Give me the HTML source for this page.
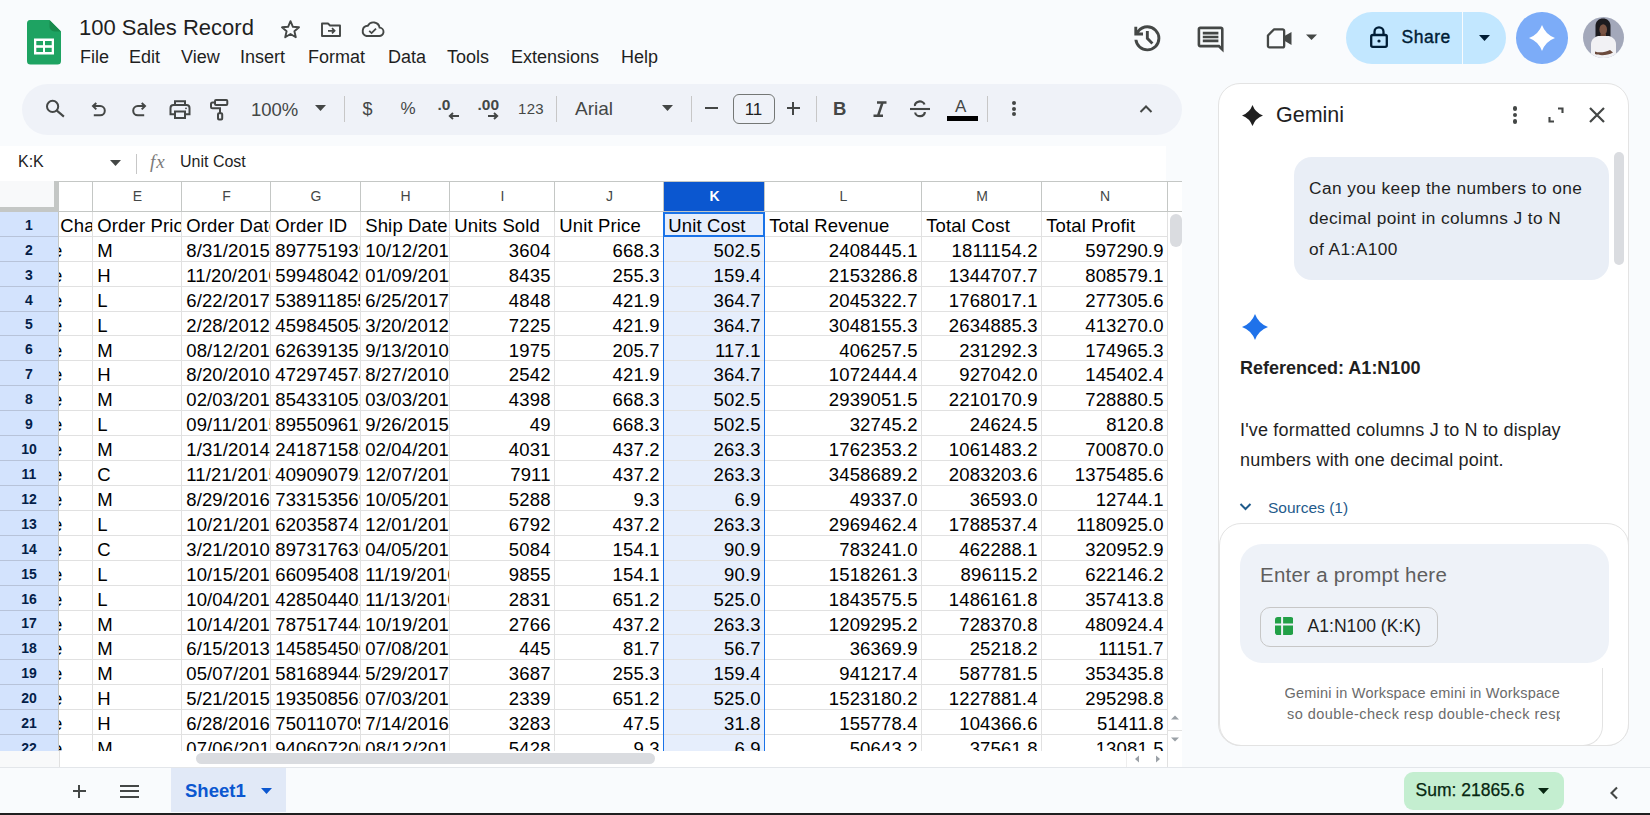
<!DOCTYPE html><html><head><meta charset="utf-8"><style>
html,body{margin:0;padding:0;}
body{width:1650px;height:815px;overflow:hidden;position:relative;background:#f9fbfd;font-family:"Liberation Sans", sans-serif;}
.a{position:absolute;}
.t{position:absolute;white-space:nowrap;}
.cell{position:absolute;overflow:hidden;white-space:nowrap;font-size:18.5px;letter-spacing:0.15px;color:#000;}
</style></head><body>
<svg class="a" style="left:27px;top:20px;" width="34" height="45" viewBox="0 0 34 45"><path d="M3 0h19.5l11.5 11.5v29.5a3.5 3.5 0 0 1-3.5 3.5h-27A3.5 3.5 0 0 1 0 41V3.5A3.5 3.5 0 0 1 3 0z" fill="#1ea362"/>
<path d="M22.5 0l11.5 11.5h-6.5a5 5 0 0 1-5-5z" fill="#188a4c"/>
<rect x="7" y="18.5" width="20" height="16" fill="#fff"/>
<rect x="9.3" y="21" width="6.7" height="4.2" fill="#1ea362"/><rect x="18" y="21" width="6.7" height="4.2" fill="#1ea362"/>
<rect x="9.3" y="27.8" width="6.7" height="4.2" fill="#1ea362"/><rect x="18" y="27.8" width="6.7" height="4.2" fill="#1ea362"/></svg>
<div class="t" style="left:79px;top:16.88px;font-size:22px;line-height:22px;color:#1f1f1f;font-weight:normal;">100 Sales Record</div>
<svg class="a" style="left:280px;top:19px;" width="21" height="21" viewBox="0 0 21 21"><path d="M10.5 2.2l2.4 5.6 6.1.5-4.6 4 1.4 5.9-5.3-3.2-5.3 3.2 1.4-5.9-4.6-4 6.1-.5z" fill="none" stroke="#444746" stroke-width="1.9" stroke-linejoin="round"/></svg>
<svg class="a" style="left:320px;top:19px;" width="22" height="21" viewBox="0 0 22 21"><path d="M2 4.5h6l2 2h10v10.5H2z" fill="none" stroke="#444746" stroke-width="1.9" stroke-linejoin="round"/><path d="M8 11.8h6.5M12 9.2l2.6 2.6-2.6 2.6" fill="none" stroke="#444746" stroke-width="1.7"/></svg>
<svg class="a" style="left:360px;top:19px;" width="25" height="21" viewBox="0 0 25 21"><path d="M6.5 17h12.5a4.2 4.2 0 0 0 .6-8.4A6.3 6.3 0 0 0 7.8 6.8 5.2 5.2 0 0 0 6.5 17z" fill="none" stroke="#444746" stroke-width="1.9"/><path d="M9.2 11.8l2.4 2.3 4.4-4.4" fill="none" stroke="#444746" stroke-width="1.8"/></svg>
<div class="t" style="left:80px;top:48.36px;font-size:18px;line-height:18px;color:#1f1f1f;font-weight:normal;">File</div>
<div class="t" style="left:129px;top:48.36px;font-size:18px;line-height:18px;color:#1f1f1f;font-weight:normal;">Edit</div>
<div class="t" style="left:181px;top:48.36px;font-size:18px;line-height:18px;color:#1f1f1f;font-weight:normal;">View</div>
<div class="t" style="left:240px;top:48.36px;font-size:18px;line-height:18px;color:#1f1f1f;font-weight:normal;">Insert</div>
<div class="t" style="left:308px;top:48.36px;font-size:18px;line-height:18px;color:#1f1f1f;font-weight:normal;">Format</div>
<div class="t" style="left:388px;top:48.36px;font-size:18px;line-height:18px;color:#1f1f1f;font-weight:normal;">Data</div>
<div class="t" style="left:447px;top:48.36px;font-size:18px;line-height:18px;color:#1f1f1f;font-weight:normal;">Tools</div>
<div class="t" style="left:511px;top:48.36px;font-size:18px;line-height:18px;color:#1f1f1f;font-weight:normal;">Extensions</div>
<div class="t" style="left:621px;top:48.36px;font-size:18px;line-height:18px;color:#1f1f1f;font-weight:normal;">Help</div>
<svg class="a" style="left:1129.6px;top:20.6px;" width="34.7" height="34.7" viewBox="0 -960 960 960"><path d="M480-120q-138 0-240.5-91.5T122-440h82q14 104 92.5 172T480-200q117 0 198.5-81.5T760-480q0-117-81.5-198.5T480-760q-69 0-129 32t-101 88h110v80H120v-240h80v94q51-64 124.5-99T480-840q75 0 140.5 28.5t114 77q48.5 48.5 77 114T840-480q0 75-28.5 140.5t-77 114q-48.5 48.5-114 77T480-120Zm112-192L440-464v-216h80v184l128 128-56 56Z" fill="#444746"/></svg>
<svg class="a" style="left:1195px;top:23.5px;" width="31.2" height="31.2" viewBox="0 -960 960 960"><path d="M240-400h480v-80H240v80Zm0-120h480v-80H240v80Zm0-120h480v-80H240v80ZM880-80 720-240H160q-33 0-56.5-23.5T80-320v-480q0-33 23.5-56.5T160-880h640q33 0 56.5 23.5T880-800v720ZM160-320h594l46 45v-525H160v480Zm0 0v-480 480Z" fill="#444746"/></svg>
<svg class="a" style="left:1265px;top:27px;" width="30" height="24" viewBox="0 0 30 24"><path d="M8.9 2.45H17.6a1.5 1.5 0 0 1 1.55 1.5V19a1.5 1.5 0 0 1-1.5 1.45H4.5a1.5 1.5 0 0 1-1.55-1.5V8.5z" fill="none" stroke="#444746" stroke-width="2.3" stroke-linejoin="round"/><path d="M19 9.3l7.5-4.4v13.1L19 13.6z" fill="#444746"/></svg>
<svg class="a" style="left:1305px;top:33px;" width="13" height="8" viewBox="0 0 13 8"><path d="M1 1.5h11L6.5 7z" fill="#444746"/></svg>
<div class="a" style="left:1345.5px;top:12px;width:160px;height:51.5px;background:#c2e7ff;border-radius:26px;"></div>
<div class="a" style="left:1462px;top:12px;width:1.3px;height:51.5px;background:#f9fbfd;"></div>
<svg class="a" style="left:1369px;top:25px;" width="20" height="24" viewBox="0 0 20 24"><rect x="2.2" y="10" width="15.6" height="11.8" rx="1.6" fill="none" stroke="#001d35" stroke-width="2.3"/><path d="M5.5 10V6.8a4.5 4.5 0 0 1 9 0V10" fill="none" stroke="#001d35" stroke-width="2.3"/><circle cx="10" cy="16" r="1.6" fill="#001d35"/></svg>
<div class="t" style="left:1401.5px;top:28.79px;font-size:17.5px;line-height:17.5px;color:#001d35;font-weight:normal;letter-spacing:0.5px;-webkit-text-stroke:0.4px #001d35;">Share</div>
<svg class="a" style="left:1478px;top:34px;" width="13" height="8" viewBox="0 0 13 8"><path d="M1 1h11L6.5 7z" fill="#001d35"/></svg>
<div class="a" style="left:1516px;top:12px;width:51.5px;height:51.5px;background:#7cacf8;border-radius:50%;"></div>
<svg class="a" style="left:1528.8px;top:24.8px;" width="26" height="26" viewBox="0 0 24 24"><path d="M12 0Q15.2 8.8 24 12 15.2 15.2 12 24 8.8 15.2 0 12 8.8 8.8 12 0z" fill="#fff"/></svg>
<svg class="a" style="left:1583px;top:17.4px;" width="41" height="41" viewBox="0 0 41 41"><defs><clipPath id="av"><circle cx="20.5" cy="20.5" r="20.5"/></clipPath></defs><g clip-path="url(#av)"><rect width="41" height="41" fill="#a3a8ba"/><path d="M12.5 9c0-5 3.5-7.5 7.5-7.5s7.5 2.5 7.5 7.5v11c0 1.5-1 2.5-2.5 2.5h-10c-1.5 0-2.5-1-2.5-2.5z" fill="#1c1b1f"/><ellipse cx="20.2" cy="12.5" rx="3.8" ry="5.3" fill="#7a5444"/><path d="M17.5 17h5.5v4h-5.5z" fill="#6e4a3a"/><path d="M8 41V27c0-4 3.5-7.5 7.5-8h10c4 .5 7.5 4 7.5 8v14z" fill="#f1f1f4"/><path d="M12 34.5c4 1.5 10 1 15-1.5l3 2.5c-5 3-13 3.5-18 1.5z" fill="#6b4a3c"/></g></svg>
<div class="a" style="left:21.5px;top:84px;width:1160.5px;height:50.5px;background:#eff2f8;border-radius:26px;"></div>
<svg class="a" style="left:44px;top:97px;" width="24" height="24" viewBox="0 0 24 24"><circle cx="8.6" cy="9.4" r="5.6" fill="none" stroke="#444746" stroke-width="2"/><path d="M12.6 13.4l7.3 6.2" stroke="#444746" stroke-width="2.1"/></svg>
<svg class="a" style="left:87px;top:98px;" width="24" height="24" viewBox="0 0 24 24"><path d="M6.8 17.3h6.4a4.6 4.6 0 0 0 0-9.2H6" fill="none" stroke="#444746" stroke-width="2"/><path d="M9.3 5L6 8.1l3.3 3.3" fill="none" stroke="#444746" stroke-width="2"/></svg>
<svg class="a" style="left:126px;top:98px;" width="24" height="24" viewBox="0 0 24 24"><path d="M18.2 17.3h-6.4a4.6 4.6 0 0 1 0-9.2H19" fill="none" stroke="#444746" stroke-width="2"/><path d="M15.7 5l3.3 3.1-3.3 3.3" fill="none" stroke="#444746" stroke-width="2"/></svg>
<svg class="a" style="left:167px;top:97px;" width="26" height="26" viewBox="0 0 26 26"><path d="M8 7.5V4.3h10v3.2" fill="none" stroke="#444746" stroke-width="2"/><path d="M7.5 17.3H3.5v-6.3a3 3 0 0 1 3-3h13a3 3 0 0 1 3 3v6.3h-4" fill="none" stroke="#444746" stroke-width="2"/><rect x="8" y="14.5" width="10" height="6.5" fill="none" stroke="#444746" stroke-width="2"/><circle cx="19" cy="11.3" r="0.9" fill="#444746"/></svg>
<svg class="a" style="left:207px;top:96px;" width="24" height="28" viewBox="0 0 24 28"><rect x="8" y="4" width="12.3" height="5" rx="1" fill="none" stroke="#444746" stroke-width="2"/><path d="M8 6.5H5.5a1.5 1.5 0 0 0-1.5 1.5v2.7a1.5 1.5 0 0 0 1.5 1.5h7.5v5.3" fill="none" stroke="#444746" stroke-width="2"/><rect x="11" y="17.3" width="4.2" height="6.3" rx="1" fill="none" stroke="#444746" stroke-width="2"/></svg>
<div class="t" style="left:251px;top:100.84px;font-size:18.5px;line-height:18.5px;color:#444746;font-weight:normal;">100%</div>
<svg class="a" style="left:314px;top:104px;" width="13" height="8" viewBox="0 0 13 8"><path d="M1 1h11L6.5 7z" fill="#444746"/></svg>
<div class="a" style="left:343.5px;top:96px;width:1px;height:26px;background:#c7c7c7;"></div>
<div class="t" style="left:362.5px;top:100.26px;font-size:18px;line-height:18px;color:#444746;font-weight:500;">$</div>
<div class="t" style="left:400.5px;top:100.11px;font-size:17px;line-height:17px;color:#444746;font-weight:normal;">%</div>
<div class="t" style="left:437.5px;top:97.38px;font-size:15.5px;line-height:15.5px;color:#444746;font-weight:bold;">.0</div>
<svg class="a" style="left:447px;top:112px;" width="13" height="8" viewBox="0 0 13 8"><path d="M12 4H3M6 1L2.8 4 6 7" fill="none" stroke="#444746" stroke-width="1.9"/></svg>
<div class="t" style="left:477.5px;top:97.38px;font-size:15.5px;line-height:15.5px;color:#444746;font-weight:bold;">.00</div>
<svg class="a" style="left:487px;top:112px;" width="13" height="8" viewBox="0 0 13 8"><path d="M1 4h9M7 1l3.2 3L7 7" fill="none" stroke="#444746" stroke-width="1.9"/></svg>
<div class="t" style="left:518px;top:100.80px;font-size:15px;line-height:15px;color:#444746;font-weight:normal;letter-spacing:0.3px;">123</div>
<div class="a" style="left:556px;top:96px;width:1px;height:26px;background:#c7c7c7;"></div>
<div class="t" style="left:575px;top:99.42px;font-size:19px;line-height:19px;color:#444746;font-weight:normal;">Arial</div>
<svg class="a" style="left:660.5px;top:104px;" width="13" height="8" viewBox="0 0 13 8"><path d="M1 1h11L6.5 7z" fill="#444746"/></svg>
<div class="a" style="left:691px;top:96px;width:1px;height:26px;background:#c7c7c7;"></div>
<div class="a" style="left:705px;top:107px;width:13px;height:2px;background:#444746;"></div>
<div class="a" style="left:732.5px;top:94px;width:42px;height:29.5px;background:transparent;border:1.3px solid #747775;border-radius:6px;box-sizing:border-box;"></div>
<div class="t" style="left:733.5px;width:40px;text-align:center;top:101.11px;font-size:17px;line-height:17px;color:#1f1f1f;font-weight:normal;">11</div>
<div class="a" style="left:786.5px;top:107px;width:13px;height:2px;background:#444746;"></div>
<div class="a" style="left:792px;top:101.5px;width:2px;height:13px;background:#444746;"></div>
<div class="a" style="left:815.5px;top:96px;width:1px;height:26px;background:#c7c7c7;"></div>
<div class="t" style="left:833px;top:99.54px;font-size:18.5px;line-height:18.5px;color:#444746;font-weight:bold;">B</div>
<svg class="a" style="left:868px;top:97px;" width="24" height="24" viewBox="0 0 24 24"><path d="M9 5.5h9.5M5.5 18.8h9.5M14.5 5.5L10 18.8" fill="none" stroke="#444746" stroke-width="2.5"/></svg>
<svg class="a" style="left:908px;top:97px;" width="24" height="24" viewBox="0 0 24 24"><path d="M2 12h20" stroke="#444746" stroke-width="2.1"/><path d="M7 9a4.5 3.5 0 0 1 9.5-1.5" fill="none" stroke="#444746" stroke-width="2.2"/><path d="M16.8 15a4.7 3.8 0 0 1-9.6 0.5" fill="none" stroke="#444746" stroke-width="2.2"/></svg>
<div class="t" style="left:955px;top:98.31px;font-size:17px;line-height:17px;color:#444746;font-weight:normal;">A</div>
<div class="a" style="left:946.5px;top:116px;width:31px;height:5px;background:#000;"></div>
<div class="a" style="left:987px;top:96px;width:1px;height:26px;background:#c7c7c7;"></div>
<div class="a" style="left:1011.5px;top:101.39999999999999px;width:4px;height:4px;background:#444746;border-radius:50%;"></div>
<div class="a" style="left:1011.5px;top:106.6px;width:4px;height:4px;background:#444746;border-radius:50%;"></div>
<div class="a" style="left:1011.5px;top:111.8px;width:4px;height:4px;background:#444746;border-radius:50%;"></div>
<svg class="a" style="left:1139px;top:103.5px;" width="14" height="10" viewBox="0 0 14 10"><path d="M1.5 8L7 2.5l5.5 5.5" fill="none" stroke="#444746" stroke-width="2"/></svg>
<div class="a" style="left:0px;top:145.5px;width:1166px;height:35.5px;background:#fff;"></div>
<div class="t" style="left:18px;top:154.06px;font-size:16px;line-height:16px;color:#1f1f1f;font-weight:normal;">K:K</div>
<svg class="a" style="left:109px;top:159px;" width="13" height="8" viewBox="0 0 13 8"><path d="M1 1h11L6.5 7z" fill="#444746"/></svg>
<div class="a" style="left:136px;top:153.5px;width:1px;height:20px;background:#c7c7c7;"></div>
<div class="t" style="left:150px;top:152.42px;font-size:19px;line-height:19px;color:#7b7b7b;font-weight:normal;font-family:'Liberation Serif',serif;letter-spacing:1px;"><i>fx</i></div>
<div class="t" style="left:180px;top:154.06px;font-size:16px;line-height:16px;color:#1f1f1f;font-weight:normal;">Unit Cost</div>
<div class="a" style="left:0px;top:181px;width:1182px;height:570px;background:#fff;"></div>
<div class="a" style="left:664px;top:211.5px;width:100px;height:539.5px;background:#e6eefc;"></div>
<div class="cell" style="left:3.80px;top:211.50px;width:88.20px;height:24.80px;"><span class="a" style="left:4.2px;top:5.44px;line-height:18.5px;">Sales Channel</span></div>
<div class="cell" style="left:93.00px;top:211.50px;width:88.00px;height:24.80px;"><span class="a" style="left:4.2px;top:5.44px;line-height:18.5px;">Order Priority</span></div>
<div class="cell" style="left:182.00px;top:211.50px;width:88.00px;height:24.80px;"><span class="a" style="left:4.2px;top:5.44px;line-height:18.5px;">Order Date</span></div>
<div class="cell" style="left:271.00px;top:211.50px;width:89.00px;height:24.80px;"><span class="a" style="left:4.2px;top:5.44px;line-height:18.5px;">Order ID</span></div>
<div class="cell" style="left:361.00px;top:211.50px;width:88.00px;height:24.80px;"><span class="a" style="left:4.2px;top:5.44px;line-height:18.5px;">Ship Date</span></div>
<div class="cell" style="left:450.00px;top:211.50px;width:104.00px;height:24.80px;"><span class="a" style="left:4.2px;top:5.44px;line-height:18.5px;">Units Sold</span></div>
<div class="cell" style="left:555.00px;top:211.50px;width:108.00px;height:24.80px;"><span class="a" style="left:4.2px;top:5.44px;line-height:18.5px;">Unit Price</span></div>
<div class="cell" style="left:664.00px;top:211.50px;width:100.00px;height:24.80px;"><span class="a" style="left:4.2px;top:5.44px;line-height:18.5px;">Unit Cost</span></div>
<div class="cell" style="left:765.00px;top:211.50px;width:156.00px;height:24.80px;"><span class="a" style="left:4.2px;top:5.44px;line-height:18.5px;">Total Revenue</span></div>
<div class="cell" style="left:922.00px;top:211.50px;width:119.00px;height:24.80px;"><span class="a" style="left:4.2px;top:5.44px;line-height:18.5px;">Total Cost</span></div>
<div class="cell" style="left:1042.00px;top:211.50px;width:125.00px;height:24.80px;"><span class="a" style="left:4.2px;top:5.44px;line-height:18.5px;">Total Profit</span></div>
<div class="cell" style="left:3.80px;top:236.30px;width:88.20px;height:24.92px;"><span class="a" style="left:4.2px;top:5.55px;line-height:18.5px;">Online</span></div>
<div class="cell" style="left:93.00px;top:236.30px;width:88.00px;height:24.92px;"><span class="a" style="left:4.2px;top:5.55px;line-height:18.5px;">M</span></div>
<div class="cell" style="left:182.00px;top:236.30px;width:88.00px;height:24.92px;"><span class="a" style="left:4.2px;top:5.55px;line-height:18.5px;">8/31/2015</span></div>
<div class="cell" style="left:271.00px;top:236.30px;width:89.00px;height:24.92px;"><span class="a" style="left:4.2px;top:5.55px;line-height:18.5px;">897751939</span></div>
<div class="cell" style="left:361.00px;top:236.30px;width:88.00px;height:24.92px;"><span class="a" style="left:4.2px;top:5.55px;line-height:18.5px;">10/12/2015</span></div>
<div class="cell" style="left:450.00px;top:236.30px;width:104.00px;height:24.92px;"><span class="a" style="right:3.4px;top:5.55px;line-height:18.5px;">3604</span></div>
<div class="cell" style="left:555.00px;top:236.30px;width:108.00px;height:24.92px;"><span class="a" style="right:3.4px;top:5.55px;line-height:18.5px;">668.3</span></div>
<div class="cell" style="left:664.00px;top:236.30px;width:100.00px;height:24.92px;"><span class="a" style="right:3.4px;top:5.55px;line-height:18.5px;">502.5</span></div>
<div class="cell" style="left:765.00px;top:236.30px;width:156.00px;height:24.92px;"><span class="a" style="right:3.4px;top:5.55px;line-height:18.5px;">2408445.1</span></div>
<div class="cell" style="left:922.00px;top:236.30px;width:119.00px;height:24.92px;"><span class="a" style="right:3.4px;top:5.55px;line-height:18.5px;">1811154.2</span></div>
<div class="cell" style="left:1042.00px;top:236.30px;width:125.00px;height:24.92px;"><span class="a" style="right:3.4px;top:5.55px;line-height:18.5px;">597290.9</span></div>
<div class="cell" style="left:3.80px;top:261.22px;width:88.20px;height:24.91px;"><span class="a" style="left:4.2px;top:5.55px;line-height:18.5px;">Online</span></div>
<div class="cell" style="left:93.00px;top:261.22px;width:88.00px;height:24.91px;"><span class="a" style="left:4.2px;top:5.55px;line-height:18.5px;">H</span></div>
<div class="cell" style="left:182.00px;top:261.22px;width:88.00px;height:24.91px;"><span class="a" style="left:4.2px;top:5.55px;line-height:18.5px;">11/20/2010</span></div>
<div class="cell" style="left:271.00px;top:261.22px;width:89.00px;height:24.91px;"><span class="a" style="left:4.2px;top:5.55px;line-height:18.5px;">599480426</span></div>
<div class="cell" style="left:361.00px;top:261.22px;width:88.00px;height:24.91px;"><span class="a" style="left:4.2px;top:5.55px;line-height:18.5px;">01/09/2011</span></div>
<div class="cell" style="left:450.00px;top:261.22px;width:104.00px;height:24.91px;"><span class="a" style="right:3.4px;top:5.55px;line-height:18.5px;">8435</span></div>
<div class="cell" style="left:555.00px;top:261.22px;width:108.00px;height:24.91px;"><span class="a" style="right:3.4px;top:5.55px;line-height:18.5px;">255.3</span></div>
<div class="cell" style="left:664.00px;top:261.22px;width:100.00px;height:24.91px;"><span class="a" style="right:3.4px;top:5.55px;line-height:18.5px;">159.4</span></div>
<div class="cell" style="left:765.00px;top:261.22px;width:156.00px;height:24.91px;"><span class="a" style="right:3.4px;top:5.55px;line-height:18.5px;">2153286.8</span></div>
<div class="cell" style="left:922.00px;top:261.22px;width:119.00px;height:24.91px;"><span class="a" style="right:3.4px;top:5.55px;line-height:18.5px;">1344707.7</span></div>
<div class="cell" style="left:1042.00px;top:261.22px;width:125.00px;height:24.91px;"><span class="a" style="right:3.4px;top:5.55px;line-height:18.5px;">808579.1</span></div>
<div class="cell" style="left:3.80px;top:286.13px;width:88.20px;height:24.92px;"><span class="a" style="left:4.2px;top:5.55px;line-height:18.5px;">Online</span></div>
<div class="cell" style="left:93.00px;top:286.13px;width:88.00px;height:24.92px;"><span class="a" style="left:4.2px;top:5.55px;line-height:18.5px;">L</span></div>
<div class="cell" style="left:182.00px;top:286.13px;width:88.00px;height:24.92px;"><span class="a" style="left:4.2px;top:5.55px;line-height:18.5px;">6/22/2017</span></div>
<div class="cell" style="left:271.00px;top:286.13px;width:89.00px;height:24.92px;"><span class="a" style="left:4.2px;top:5.55px;line-height:18.5px;">538911855</span></div>
<div class="cell" style="left:361.00px;top:286.13px;width:88.00px;height:24.92px;"><span class="a" style="left:4.2px;top:5.55px;line-height:18.5px;">6/25/2017</span></div>
<div class="cell" style="left:450.00px;top:286.13px;width:104.00px;height:24.92px;"><span class="a" style="right:3.4px;top:5.55px;line-height:18.5px;">4848</span></div>
<div class="cell" style="left:555.00px;top:286.13px;width:108.00px;height:24.92px;"><span class="a" style="right:3.4px;top:5.55px;line-height:18.5px;">421.9</span></div>
<div class="cell" style="left:664.00px;top:286.13px;width:100.00px;height:24.92px;"><span class="a" style="right:3.4px;top:5.55px;line-height:18.5px;">364.7</span></div>
<div class="cell" style="left:765.00px;top:286.13px;width:156.00px;height:24.92px;"><span class="a" style="right:3.4px;top:5.55px;line-height:18.5px;">2045322.7</span></div>
<div class="cell" style="left:922.00px;top:286.13px;width:119.00px;height:24.92px;"><span class="a" style="right:3.4px;top:5.55px;line-height:18.5px;">1768017.1</span></div>
<div class="cell" style="left:1042.00px;top:286.13px;width:125.00px;height:24.92px;"><span class="a" style="right:3.4px;top:5.55px;line-height:18.5px;">277305.6</span></div>
<div class="cell" style="left:3.80px;top:311.05px;width:88.20px;height:24.92px;"><span class="a" style="left:4.2px;top:5.55px;line-height:18.5px;">Online</span></div>
<div class="cell" style="left:93.00px;top:311.05px;width:88.00px;height:24.92px;"><span class="a" style="left:4.2px;top:5.55px;line-height:18.5px;">L</span></div>
<div class="cell" style="left:182.00px;top:311.05px;width:88.00px;height:24.92px;"><span class="a" style="left:4.2px;top:5.55px;line-height:18.5px;">2/28/2012</span></div>
<div class="cell" style="left:271.00px;top:311.05px;width:89.00px;height:24.92px;"><span class="a" style="left:4.2px;top:5.55px;line-height:18.5px;">459845054</span></div>
<div class="cell" style="left:361.00px;top:311.05px;width:88.00px;height:24.92px;"><span class="a" style="left:4.2px;top:5.55px;line-height:18.5px;">3/20/2012</span></div>
<div class="cell" style="left:450.00px;top:311.05px;width:104.00px;height:24.92px;"><span class="a" style="right:3.4px;top:5.55px;line-height:18.5px;">7225</span></div>
<div class="cell" style="left:555.00px;top:311.05px;width:108.00px;height:24.92px;"><span class="a" style="right:3.4px;top:5.55px;line-height:18.5px;">421.9</span></div>
<div class="cell" style="left:664.00px;top:311.05px;width:100.00px;height:24.92px;"><span class="a" style="right:3.4px;top:5.55px;line-height:18.5px;">364.7</span></div>
<div class="cell" style="left:765.00px;top:311.05px;width:156.00px;height:24.92px;"><span class="a" style="right:3.4px;top:5.55px;line-height:18.5px;">3048155.3</span></div>
<div class="cell" style="left:922.00px;top:311.05px;width:119.00px;height:24.92px;"><span class="a" style="right:3.4px;top:5.55px;line-height:18.5px;">2634885.3</span></div>
<div class="cell" style="left:1042.00px;top:311.05px;width:125.00px;height:24.92px;"><span class="a" style="right:3.4px;top:5.55px;line-height:18.5px;">413270.0</span></div>
<div class="cell" style="left:3.80px;top:335.96px;width:88.20px;height:24.91px;"><span class="a" style="left:4.2px;top:5.55px;line-height:18.5px;">Online</span></div>
<div class="cell" style="left:93.00px;top:335.96px;width:88.00px;height:24.91px;"><span class="a" style="left:4.2px;top:5.55px;line-height:18.5px;">M</span></div>
<div class="cell" style="left:182.00px;top:335.96px;width:88.00px;height:24.91px;"><span class="a" style="left:4.2px;top:5.55px;line-height:18.5px;">08/12/2010</span></div>
<div class="cell" style="left:271.00px;top:335.96px;width:89.00px;height:24.91px;"><span class="a" style="left:4.2px;top:5.55px;line-height:18.5px;">626391351</span></div>
<div class="cell" style="left:361.00px;top:335.96px;width:88.00px;height:24.91px;"><span class="a" style="left:4.2px;top:5.55px;line-height:18.5px;">9/13/2010</span></div>
<div class="cell" style="left:450.00px;top:335.96px;width:104.00px;height:24.91px;"><span class="a" style="right:3.4px;top:5.55px;line-height:18.5px;">1975</span></div>
<div class="cell" style="left:555.00px;top:335.96px;width:108.00px;height:24.91px;"><span class="a" style="right:3.4px;top:5.55px;line-height:18.5px;">205.7</span></div>
<div class="cell" style="left:664.00px;top:335.96px;width:100.00px;height:24.91px;"><span class="a" style="right:3.4px;top:5.55px;line-height:18.5px;">117.1</span></div>
<div class="cell" style="left:765.00px;top:335.96px;width:156.00px;height:24.91px;"><span class="a" style="right:3.4px;top:5.55px;line-height:18.5px;">406257.5</span></div>
<div class="cell" style="left:922.00px;top:335.96px;width:119.00px;height:24.91px;"><span class="a" style="right:3.4px;top:5.55px;line-height:18.5px;">231292.3</span></div>
<div class="cell" style="left:1042.00px;top:335.96px;width:125.00px;height:24.91px;"><span class="a" style="right:3.4px;top:5.55px;line-height:18.5px;">174965.3</span></div>
<div class="cell" style="left:3.80px;top:360.88px;width:88.20px;height:24.92px;"><span class="a" style="left:4.2px;top:5.55px;line-height:18.5px;">Online</span></div>
<div class="cell" style="left:93.00px;top:360.88px;width:88.00px;height:24.92px;"><span class="a" style="left:4.2px;top:5.55px;line-height:18.5px;">H</span></div>
<div class="cell" style="left:182.00px;top:360.88px;width:88.00px;height:24.92px;"><span class="a" style="left:4.2px;top:5.55px;line-height:18.5px;">8/20/2010</span></div>
<div class="cell" style="left:271.00px;top:360.88px;width:89.00px;height:24.92px;"><span class="a" style="left:4.2px;top:5.55px;line-height:18.5px;">472974574</span></div>
<div class="cell" style="left:361.00px;top:360.88px;width:88.00px;height:24.92px;"><span class="a" style="left:4.2px;top:5.55px;line-height:18.5px;">8/27/2010</span></div>
<div class="cell" style="left:450.00px;top:360.88px;width:104.00px;height:24.92px;"><span class="a" style="right:3.4px;top:5.55px;line-height:18.5px;">2542</span></div>
<div class="cell" style="left:555.00px;top:360.88px;width:108.00px;height:24.92px;"><span class="a" style="right:3.4px;top:5.55px;line-height:18.5px;">421.9</span></div>
<div class="cell" style="left:664.00px;top:360.88px;width:100.00px;height:24.92px;"><span class="a" style="right:3.4px;top:5.55px;line-height:18.5px;">364.7</span></div>
<div class="cell" style="left:765.00px;top:360.88px;width:156.00px;height:24.92px;"><span class="a" style="right:3.4px;top:5.55px;line-height:18.5px;">1072444.4</span></div>
<div class="cell" style="left:922.00px;top:360.88px;width:119.00px;height:24.92px;"><span class="a" style="right:3.4px;top:5.55px;line-height:18.5px;">927042.0</span></div>
<div class="cell" style="left:1042.00px;top:360.88px;width:125.00px;height:24.92px;"><span class="a" style="right:3.4px;top:5.55px;line-height:18.5px;">145402.4</span></div>
<div class="cell" style="left:3.80px;top:385.79px;width:88.20px;height:24.92px;"><span class="a" style="left:4.2px;top:5.55px;line-height:18.5px;">Online</span></div>
<div class="cell" style="left:93.00px;top:385.79px;width:88.00px;height:24.92px;"><span class="a" style="left:4.2px;top:5.55px;line-height:18.5px;">M</span></div>
<div class="cell" style="left:182.00px;top:385.79px;width:88.00px;height:24.92px;"><span class="a" style="left:4.2px;top:5.55px;line-height:18.5px;">02/03/2013</span></div>
<div class="cell" style="left:271.00px;top:385.79px;width:89.00px;height:24.92px;"><span class="a" style="left:4.2px;top:5.55px;line-height:18.5px;">854331052</span></div>
<div class="cell" style="left:361.00px;top:385.79px;width:88.00px;height:24.92px;"><span class="a" style="left:4.2px;top:5.55px;line-height:18.5px;">03/03/2013</span></div>
<div class="cell" style="left:450.00px;top:385.79px;width:104.00px;height:24.92px;"><span class="a" style="right:3.4px;top:5.55px;line-height:18.5px;">4398</span></div>
<div class="cell" style="left:555.00px;top:385.79px;width:108.00px;height:24.92px;"><span class="a" style="right:3.4px;top:5.55px;line-height:18.5px;">668.3</span></div>
<div class="cell" style="left:664.00px;top:385.79px;width:100.00px;height:24.92px;"><span class="a" style="right:3.4px;top:5.55px;line-height:18.5px;">502.5</span></div>
<div class="cell" style="left:765.00px;top:385.79px;width:156.00px;height:24.92px;"><span class="a" style="right:3.4px;top:5.55px;line-height:18.5px;">2939051.5</span></div>
<div class="cell" style="left:922.00px;top:385.79px;width:119.00px;height:24.92px;"><span class="a" style="right:3.4px;top:5.55px;line-height:18.5px;">2210170.9</span></div>
<div class="cell" style="left:1042.00px;top:385.79px;width:125.00px;height:24.92px;"><span class="a" style="right:3.4px;top:5.55px;line-height:18.5px;">728880.5</span></div>
<div class="cell" style="left:3.80px;top:410.71px;width:88.20px;height:24.91px;"><span class="a" style="left:4.2px;top:5.55px;line-height:18.5px;">Online</span></div>
<div class="cell" style="left:93.00px;top:410.71px;width:88.00px;height:24.91px;"><span class="a" style="left:4.2px;top:5.55px;line-height:18.5px;">L</span></div>
<div class="cell" style="left:182.00px;top:410.71px;width:88.00px;height:24.91px;"><span class="a" style="left:4.2px;top:5.55px;line-height:18.5px;">09/11/2015</span></div>
<div class="cell" style="left:271.00px;top:410.71px;width:89.00px;height:24.91px;"><span class="a" style="left:4.2px;top:5.55px;line-height:18.5px;">895509612</span></div>
<div class="cell" style="left:361.00px;top:410.71px;width:88.00px;height:24.91px;"><span class="a" style="left:4.2px;top:5.55px;line-height:18.5px;">9/26/2015</span></div>
<div class="cell" style="left:450.00px;top:410.71px;width:104.00px;height:24.91px;"><span class="a" style="right:3.4px;top:5.55px;line-height:18.5px;">49</span></div>
<div class="cell" style="left:555.00px;top:410.71px;width:108.00px;height:24.91px;"><span class="a" style="right:3.4px;top:5.55px;line-height:18.5px;">668.3</span></div>
<div class="cell" style="left:664.00px;top:410.71px;width:100.00px;height:24.91px;"><span class="a" style="right:3.4px;top:5.55px;line-height:18.5px;">502.5</span></div>
<div class="cell" style="left:765.00px;top:410.71px;width:156.00px;height:24.91px;"><span class="a" style="right:3.4px;top:5.55px;line-height:18.5px;">32745.2</span></div>
<div class="cell" style="left:922.00px;top:410.71px;width:119.00px;height:24.91px;"><span class="a" style="right:3.4px;top:5.55px;line-height:18.5px;">24624.5</span></div>
<div class="cell" style="left:1042.00px;top:410.71px;width:125.00px;height:24.91px;"><span class="a" style="right:3.4px;top:5.55px;line-height:18.5px;">8120.8</span></div>
<div class="cell" style="left:3.80px;top:435.62px;width:88.20px;height:24.91px;"><span class="a" style="left:4.2px;top:5.55px;line-height:18.5px;">Online</span></div>
<div class="cell" style="left:93.00px;top:435.62px;width:88.00px;height:24.91px;"><span class="a" style="left:4.2px;top:5.55px;line-height:18.5px;">M</span></div>
<div class="cell" style="left:182.00px;top:435.62px;width:88.00px;height:24.91px;"><span class="a" style="left:4.2px;top:5.55px;line-height:18.5px;">1/31/2014</span></div>
<div class="cell" style="left:271.00px;top:435.62px;width:89.00px;height:24.91px;"><span class="a" style="left:4.2px;top:5.55px;line-height:18.5px;">241871583</span></div>
<div class="cell" style="left:361.00px;top:435.62px;width:88.00px;height:24.91px;"><span class="a" style="left:4.2px;top:5.55px;line-height:18.5px;">02/04/2014</span></div>
<div class="cell" style="left:450.00px;top:435.62px;width:104.00px;height:24.91px;"><span class="a" style="right:3.4px;top:5.55px;line-height:18.5px;">4031</span></div>
<div class="cell" style="left:555.00px;top:435.62px;width:108.00px;height:24.91px;"><span class="a" style="right:3.4px;top:5.55px;line-height:18.5px;">437.2</span></div>
<div class="cell" style="left:664.00px;top:435.62px;width:100.00px;height:24.91px;"><span class="a" style="right:3.4px;top:5.55px;line-height:18.5px;">263.3</span></div>
<div class="cell" style="left:765.00px;top:435.62px;width:156.00px;height:24.91px;"><span class="a" style="right:3.4px;top:5.55px;line-height:18.5px;">1762353.2</span></div>
<div class="cell" style="left:922.00px;top:435.62px;width:119.00px;height:24.91px;"><span class="a" style="right:3.4px;top:5.55px;line-height:18.5px;">1061483.2</span></div>
<div class="cell" style="left:1042.00px;top:435.62px;width:125.00px;height:24.91px;"><span class="a" style="right:3.4px;top:5.55px;line-height:18.5px;">700870.0</span></div>
<div class="cell" style="left:3.80px;top:460.53px;width:88.20px;height:24.92px;"><span class="a" style="left:4.2px;top:5.55px;line-height:18.5px;">Online</span></div>
<div class="cell" style="left:93.00px;top:460.53px;width:88.00px;height:24.92px;"><span class="a" style="left:4.2px;top:5.55px;line-height:18.5px;">C</span></div>
<div class="cell" style="left:182.00px;top:460.53px;width:88.00px;height:24.92px;"><span class="a" style="left:4.2px;top:5.55px;line-height:18.5px;">11/21/2015</span></div>
<div class="cell" style="left:271.00px;top:460.53px;width:89.00px;height:24.92px;"><span class="a" style="left:4.2px;top:5.55px;line-height:18.5px;">409090793</span></div>
<div class="cell" style="left:361.00px;top:460.53px;width:88.00px;height:24.92px;"><span class="a" style="left:4.2px;top:5.55px;line-height:18.5px;">12/07/2015</span></div>
<div class="cell" style="left:450.00px;top:460.53px;width:104.00px;height:24.92px;"><span class="a" style="right:3.4px;top:5.55px;line-height:18.5px;">7911</span></div>
<div class="cell" style="left:555.00px;top:460.53px;width:108.00px;height:24.92px;"><span class="a" style="right:3.4px;top:5.55px;line-height:18.5px;">437.2</span></div>
<div class="cell" style="left:664.00px;top:460.53px;width:100.00px;height:24.92px;"><span class="a" style="right:3.4px;top:5.55px;line-height:18.5px;">263.3</span></div>
<div class="cell" style="left:765.00px;top:460.53px;width:156.00px;height:24.92px;"><span class="a" style="right:3.4px;top:5.55px;line-height:18.5px;">3458689.2</span></div>
<div class="cell" style="left:922.00px;top:460.53px;width:119.00px;height:24.92px;"><span class="a" style="right:3.4px;top:5.55px;line-height:18.5px;">2083203.6</span></div>
<div class="cell" style="left:1042.00px;top:460.53px;width:125.00px;height:24.92px;"><span class="a" style="right:3.4px;top:5.55px;line-height:18.5px;">1375485.6</span></div>
<div class="cell" style="left:3.80px;top:485.45px;width:88.20px;height:24.92px;"><span class="a" style="left:4.2px;top:5.55px;line-height:18.5px;">Online</span></div>
<div class="cell" style="left:93.00px;top:485.45px;width:88.00px;height:24.92px;"><span class="a" style="left:4.2px;top:5.55px;line-height:18.5px;">M</span></div>
<div class="cell" style="left:182.00px;top:485.45px;width:88.00px;height:24.92px;"><span class="a" style="left:4.2px;top:5.55px;line-height:18.5px;">8/29/2016</span></div>
<div class="cell" style="left:271.00px;top:485.45px;width:89.00px;height:24.92px;"><span class="a" style="left:4.2px;top:5.55px;line-height:18.5px;">733153569</span></div>
<div class="cell" style="left:361.00px;top:485.45px;width:88.00px;height:24.92px;"><span class="a" style="left:4.2px;top:5.55px;line-height:18.5px;">10/05/2016</span></div>
<div class="cell" style="left:450.00px;top:485.45px;width:104.00px;height:24.92px;"><span class="a" style="right:3.4px;top:5.55px;line-height:18.5px;">5288</span></div>
<div class="cell" style="left:555.00px;top:485.45px;width:108.00px;height:24.92px;"><span class="a" style="right:3.4px;top:5.55px;line-height:18.5px;">9.3</span></div>
<div class="cell" style="left:664.00px;top:485.45px;width:100.00px;height:24.92px;"><span class="a" style="right:3.4px;top:5.55px;line-height:18.5px;">6.9</span></div>
<div class="cell" style="left:765.00px;top:485.45px;width:156.00px;height:24.92px;"><span class="a" style="right:3.4px;top:5.55px;line-height:18.5px;">49337.0</span></div>
<div class="cell" style="left:922.00px;top:485.45px;width:119.00px;height:24.92px;"><span class="a" style="right:3.4px;top:5.55px;line-height:18.5px;">36593.0</span></div>
<div class="cell" style="left:1042.00px;top:485.45px;width:125.00px;height:24.92px;"><span class="a" style="right:3.4px;top:5.55px;line-height:18.5px;">12744.1</span></div>
<div class="cell" style="left:3.80px;top:510.37px;width:88.20px;height:24.91px;"><span class="a" style="left:4.2px;top:5.55px;line-height:18.5px;">Online</span></div>
<div class="cell" style="left:93.00px;top:510.37px;width:88.00px;height:24.91px;"><span class="a" style="left:4.2px;top:5.55px;line-height:18.5px;">L</span></div>
<div class="cell" style="left:182.00px;top:510.37px;width:88.00px;height:24.91px;"><span class="a" style="left:4.2px;top:5.55px;line-height:18.5px;">10/21/2010</span></div>
<div class="cell" style="left:271.00px;top:510.37px;width:89.00px;height:24.91px;"><span class="a" style="left:4.2px;top:5.55px;line-height:18.5px;">620358741</span></div>
<div class="cell" style="left:361.00px;top:510.37px;width:88.00px;height:24.91px;"><span class="a" style="left:4.2px;top:5.55px;line-height:18.5px;">12/01/2010</span></div>
<div class="cell" style="left:450.00px;top:510.37px;width:104.00px;height:24.91px;"><span class="a" style="right:3.4px;top:5.55px;line-height:18.5px;">6792</span></div>
<div class="cell" style="left:555.00px;top:510.37px;width:108.00px;height:24.91px;"><span class="a" style="right:3.4px;top:5.55px;line-height:18.5px;">437.2</span></div>
<div class="cell" style="left:664.00px;top:510.37px;width:100.00px;height:24.91px;"><span class="a" style="right:3.4px;top:5.55px;line-height:18.5px;">263.3</span></div>
<div class="cell" style="left:765.00px;top:510.37px;width:156.00px;height:24.91px;"><span class="a" style="right:3.4px;top:5.55px;line-height:18.5px;">2969462.4</span></div>
<div class="cell" style="left:922.00px;top:510.37px;width:119.00px;height:24.91px;"><span class="a" style="right:3.4px;top:5.55px;line-height:18.5px;">1788537.4</span></div>
<div class="cell" style="left:1042.00px;top:510.37px;width:125.00px;height:24.91px;"><span class="a" style="right:3.4px;top:5.55px;line-height:18.5px;">1180925.0</span></div>
<div class="cell" style="left:3.80px;top:535.28px;width:88.20px;height:24.91px;"><span class="a" style="left:4.2px;top:5.55px;line-height:18.5px;">Online</span></div>
<div class="cell" style="left:93.00px;top:535.28px;width:88.00px;height:24.91px;"><span class="a" style="left:4.2px;top:5.55px;line-height:18.5px;">C</span></div>
<div class="cell" style="left:182.00px;top:535.28px;width:88.00px;height:24.91px;"><span class="a" style="left:4.2px;top:5.55px;line-height:18.5px;">3/21/2010</span></div>
<div class="cell" style="left:271.00px;top:535.28px;width:89.00px;height:24.91px;"><span class="a" style="left:4.2px;top:5.55px;line-height:18.5px;">897317636</span></div>
<div class="cell" style="left:361.00px;top:535.28px;width:88.00px;height:24.91px;"><span class="a" style="left:4.2px;top:5.55px;line-height:18.5px;">04/05/2010</span></div>
<div class="cell" style="left:450.00px;top:535.28px;width:104.00px;height:24.91px;"><span class="a" style="right:3.4px;top:5.55px;line-height:18.5px;">5084</span></div>
<div class="cell" style="left:555.00px;top:535.28px;width:108.00px;height:24.91px;"><span class="a" style="right:3.4px;top:5.55px;line-height:18.5px;">154.1</span></div>
<div class="cell" style="left:664.00px;top:535.28px;width:100.00px;height:24.91px;"><span class="a" style="right:3.4px;top:5.55px;line-height:18.5px;">90.9</span></div>
<div class="cell" style="left:765.00px;top:535.28px;width:156.00px;height:24.91px;"><span class="a" style="right:3.4px;top:5.55px;line-height:18.5px;">783241.0</span></div>
<div class="cell" style="left:922.00px;top:535.28px;width:119.00px;height:24.91px;"><span class="a" style="right:3.4px;top:5.55px;line-height:18.5px;">462288.1</span></div>
<div class="cell" style="left:1042.00px;top:535.28px;width:125.00px;height:24.91px;"><span class="a" style="right:3.4px;top:5.55px;line-height:18.5px;">320952.9</span></div>
<div class="cell" style="left:3.80px;top:560.19px;width:88.20px;height:24.92px;"><span class="a" style="left:4.2px;top:5.55px;line-height:18.5px;">Online</span></div>
<div class="cell" style="left:93.00px;top:560.19px;width:88.00px;height:24.92px;"><span class="a" style="left:4.2px;top:5.55px;line-height:18.5px;">L</span></div>
<div class="cell" style="left:182.00px;top:560.19px;width:88.00px;height:24.92px;"><span class="a" style="left:4.2px;top:5.55px;line-height:18.5px;">10/15/2010</span></div>
<div class="cell" style="left:271.00px;top:560.19px;width:89.00px;height:24.92px;"><span class="a" style="left:4.2px;top:5.55px;line-height:18.5px;">660954081</span></div>
<div class="cell" style="left:361.00px;top:560.19px;width:88.00px;height:24.92px;"><span class="a" style="left:4.2px;top:5.55px;line-height:18.5px;">11/19/2010</span></div>
<div class="cell" style="left:450.00px;top:560.19px;width:104.00px;height:24.92px;"><span class="a" style="right:3.4px;top:5.55px;line-height:18.5px;">9855</span></div>
<div class="cell" style="left:555.00px;top:560.19px;width:108.00px;height:24.92px;"><span class="a" style="right:3.4px;top:5.55px;line-height:18.5px;">154.1</span></div>
<div class="cell" style="left:664.00px;top:560.19px;width:100.00px;height:24.92px;"><span class="a" style="right:3.4px;top:5.55px;line-height:18.5px;">90.9</span></div>
<div class="cell" style="left:765.00px;top:560.19px;width:156.00px;height:24.92px;"><span class="a" style="right:3.4px;top:5.55px;line-height:18.5px;">1518261.3</span></div>
<div class="cell" style="left:922.00px;top:560.19px;width:119.00px;height:24.92px;"><span class="a" style="right:3.4px;top:5.55px;line-height:18.5px;">896115.2</span></div>
<div class="cell" style="left:1042.00px;top:560.19px;width:125.00px;height:24.92px;"><span class="a" style="right:3.4px;top:5.55px;line-height:18.5px;">622146.2</span></div>
<div class="cell" style="left:3.80px;top:585.11px;width:88.20px;height:24.91px;"><span class="a" style="left:4.2px;top:5.55px;line-height:18.5px;">Online</span></div>
<div class="cell" style="left:93.00px;top:585.11px;width:88.00px;height:24.91px;"><span class="a" style="left:4.2px;top:5.55px;line-height:18.5px;">L</span></div>
<div class="cell" style="left:182.00px;top:585.11px;width:88.00px;height:24.91px;"><span class="a" style="left:4.2px;top:5.55px;line-height:18.5px;">10/04/2010</span></div>
<div class="cell" style="left:271.00px;top:585.11px;width:89.00px;height:24.91px;"><span class="a" style="left:4.2px;top:5.55px;line-height:18.5px;">428504402</span></div>
<div class="cell" style="left:361.00px;top:585.11px;width:88.00px;height:24.91px;"><span class="a" style="left:4.2px;top:5.55px;line-height:18.5px;">11/13/2010</span></div>
<div class="cell" style="left:450.00px;top:585.11px;width:104.00px;height:24.91px;"><span class="a" style="right:3.4px;top:5.55px;line-height:18.5px;">2831</span></div>
<div class="cell" style="left:555.00px;top:585.11px;width:108.00px;height:24.91px;"><span class="a" style="right:3.4px;top:5.55px;line-height:18.5px;">651.2</span></div>
<div class="cell" style="left:664.00px;top:585.11px;width:100.00px;height:24.91px;"><span class="a" style="right:3.4px;top:5.55px;line-height:18.5px;">525.0</span></div>
<div class="cell" style="left:765.00px;top:585.11px;width:156.00px;height:24.91px;"><span class="a" style="right:3.4px;top:5.55px;line-height:18.5px;">1843575.5</span></div>
<div class="cell" style="left:922.00px;top:585.11px;width:119.00px;height:24.91px;"><span class="a" style="right:3.4px;top:5.55px;line-height:18.5px;">1486161.8</span></div>
<div class="cell" style="left:1042.00px;top:585.11px;width:125.00px;height:24.91px;"><span class="a" style="right:3.4px;top:5.55px;line-height:18.5px;">357413.8</span></div>
<div class="cell" style="left:3.80px;top:610.02px;width:88.20px;height:24.92px;"><span class="a" style="left:4.2px;top:5.55px;line-height:18.5px;">Online</span></div>
<div class="cell" style="left:93.00px;top:610.02px;width:88.00px;height:24.92px;"><span class="a" style="left:4.2px;top:5.55px;line-height:18.5px;">M</span></div>
<div class="cell" style="left:182.00px;top:610.02px;width:88.00px;height:24.92px;"><span class="a" style="left:4.2px;top:5.55px;line-height:18.5px;">10/14/2014</span></div>
<div class="cell" style="left:271.00px;top:610.02px;width:89.00px;height:24.92px;"><span class="a" style="left:4.2px;top:5.55px;line-height:18.5px;">787517444</span></div>
<div class="cell" style="left:361.00px;top:610.02px;width:88.00px;height:24.92px;"><span class="a" style="left:4.2px;top:5.55px;line-height:18.5px;">10/19/2014</span></div>
<div class="cell" style="left:450.00px;top:610.02px;width:104.00px;height:24.92px;"><span class="a" style="right:3.4px;top:5.55px;line-height:18.5px;">2766</span></div>
<div class="cell" style="left:555.00px;top:610.02px;width:108.00px;height:24.92px;"><span class="a" style="right:3.4px;top:5.55px;line-height:18.5px;">437.2</span></div>
<div class="cell" style="left:664.00px;top:610.02px;width:100.00px;height:24.92px;"><span class="a" style="right:3.4px;top:5.55px;line-height:18.5px;">263.3</span></div>
<div class="cell" style="left:765.00px;top:610.02px;width:156.00px;height:24.92px;"><span class="a" style="right:3.4px;top:5.55px;line-height:18.5px;">1209295.2</span></div>
<div class="cell" style="left:922.00px;top:610.02px;width:119.00px;height:24.92px;"><span class="a" style="right:3.4px;top:5.55px;line-height:18.5px;">728370.8</span></div>
<div class="cell" style="left:1042.00px;top:610.02px;width:125.00px;height:24.92px;"><span class="a" style="right:3.4px;top:5.55px;line-height:18.5px;">480924.4</span></div>
<div class="cell" style="left:3.80px;top:634.94px;width:88.20px;height:24.91px;"><span class="a" style="left:4.2px;top:5.55px;line-height:18.5px;">Online</span></div>
<div class="cell" style="left:93.00px;top:634.94px;width:88.00px;height:24.91px;"><span class="a" style="left:4.2px;top:5.55px;line-height:18.5px;">M</span></div>
<div class="cell" style="left:182.00px;top:634.94px;width:88.00px;height:24.91px;"><span class="a" style="left:4.2px;top:5.55px;line-height:18.5px;">6/15/2013</span></div>
<div class="cell" style="left:271.00px;top:634.94px;width:89.00px;height:24.91px;"><span class="a" style="left:4.2px;top:5.55px;line-height:18.5px;">145854500</span></div>
<div class="cell" style="left:361.00px;top:634.94px;width:88.00px;height:24.91px;"><span class="a" style="left:4.2px;top:5.55px;line-height:18.5px;">07/08/2013</span></div>
<div class="cell" style="left:450.00px;top:634.94px;width:104.00px;height:24.91px;"><span class="a" style="right:3.4px;top:5.55px;line-height:18.5px;">445</span></div>
<div class="cell" style="left:555.00px;top:634.94px;width:108.00px;height:24.91px;"><span class="a" style="right:3.4px;top:5.55px;line-height:18.5px;">81.7</span></div>
<div class="cell" style="left:664.00px;top:634.94px;width:100.00px;height:24.91px;"><span class="a" style="right:3.4px;top:5.55px;line-height:18.5px;">56.7</span></div>
<div class="cell" style="left:765.00px;top:634.94px;width:156.00px;height:24.91px;"><span class="a" style="right:3.4px;top:5.55px;line-height:18.5px;">36369.9</span></div>
<div class="cell" style="left:922.00px;top:634.94px;width:119.00px;height:24.91px;"><span class="a" style="right:3.4px;top:5.55px;line-height:18.5px;">25218.2</span></div>
<div class="cell" style="left:1042.00px;top:634.94px;width:125.00px;height:24.91px;"><span class="a" style="right:3.4px;top:5.55px;line-height:18.5px;">11151.7</span></div>
<div class="cell" style="left:3.80px;top:659.86px;width:88.20px;height:24.91px;"><span class="a" style="left:4.2px;top:5.55px;line-height:18.5px;">Online</span></div>
<div class="cell" style="left:93.00px;top:659.86px;width:88.00px;height:24.91px;"><span class="a" style="left:4.2px;top:5.55px;line-height:18.5px;">M</span></div>
<div class="cell" style="left:182.00px;top:659.86px;width:88.00px;height:24.91px;"><span class="a" style="left:4.2px;top:5.55px;line-height:18.5px;">05/07/2017</span></div>
<div class="cell" style="left:271.00px;top:659.86px;width:89.00px;height:24.91px;"><span class="a" style="left:4.2px;top:5.55px;line-height:18.5px;">581689444</span></div>
<div class="cell" style="left:361.00px;top:659.86px;width:88.00px;height:24.91px;"><span class="a" style="left:4.2px;top:5.55px;line-height:18.5px;">5/29/2017</span></div>
<div class="cell" style="left:450.00px;top:659.86px;width:104.00px;height:24.91px;"><span class="a" style="right:3.4px;top:5.55px;line-height:18.5px;">3687</span></div>
<div class="cell" style="left:555.00px;top:659.86px;width:108.00px;height:24.91px;"><span class="a" style="right:3.4px;top:5.55px;line-height:18.5px;">255.3</span></div>
<div class="cell" style="left:664.00px;top:659.86px;width:100.00px;height:24.91px;"><span class="a" style="right:3.4px;top:5.55px;line-height:18.5px;">159.4</span></div>
<div class="cell" style="left:765.00px;top:659.86px;width:156.00px;height:24.91px;"><span class="a" style="right:3.4px;top:5.55px;line-height:18.5px;">941217.4</span></div>
<div class="cell" style="left:922.00px;top:659.86px;width:119.00px;height:24.91px;"><span class="a" style="right:3.4px;top:5.55px;line-height:18.5px;">587781.5</span></div>
<div class="cell" style="left:1042.00px;top:659.86px;width:125.00px;height:24.91px;"><span class="a" style="right:3.4px;top:5.55px;line-height:18.5px;">353435.8</span></div>
<div class="cell" style="left:3.80px;top:684.77px;width:88.20px;height:24.91px;"><span class="a" style="left:4.2px;top:5.55px;line-height:18.5px;">Online</span></div>
<div class="cell" style="left:93.00px;top:684.77px;width:88.00px;height:24.91px;"><span class="a" style="left:4.2px;top:5.55px;line-height:18.5px;">H</span></div>
<div class="cell" style="left:182.00px;top:684.77px;width:88.00px;height:24.91px;"><span class="a" style="left:4.2px;top:5.55px;line-height:18.5px;">5/21/2015</span></div>
<div class="cell" style="left:271.00px;top:684.77px;width:89.00px;height:24.91px;"><span class="a" style="left:4.2px;top:5.55px;line-height:18.5px;">193508565</span></div>
<div class="cell" style="left:361.00px;top:684.77px;width:88.00px;height:24.91px;"><span class="a" style="left:4.2px;top:5.55px;line-height:18.5px;">07/03/2015</span></div>
<div class="cell" style="left:450.00px;top:684.77px;width:104.00px;height:24.91px;"><span class="a" style="right:3.4px;top:5.55px;line-height:18.5px;">2339</span></div>
<div class="cell" style="left:555.00px;top:684.77px;width:108.00px;height:24.91px;"><span class="a" style="right:3.4px;top:5.55px;line-height:18.5px;">651.2</span></div>
<div class="cell" style="left:664.00px;top:684.77px;width:100.00px;height:24.91px;"><span class="a" style="right:3.4px;top:5.55px;line-height:18.5px;">525.0</span></div>
<div class="cell" style="left:765.00px;top:684.77px;width:156.00px;height:24.91px;"><span class="a" style="right:3.4px;top:5.55px;line-height:18.5px;">1523180.2</span></div>
<div class="cell" style="left:922.00px;top:684.77px;width:119.00px;height:24.91px;"><span class="a" style="right:3.4px;top:5.55px;line-height:18.5px;">1227881.4</span></div>
<div class="cell" style="left:1042.00px;top:684.77px;width:125.00px;height:24.91px;"><span class="a" style="right:3.4px;top:5.55px;line-height:18.5px;">295298.8</span></div>
<div class="cell" style="left:3.80px;top:709.68px;width:88.20px;height:24.91px;"><span class="a" style="left:4.2px;top:5.55px;line-height:18.5px;">Online</span></div>
<div class="cell" style="left:93.00px;top:709.68px;width:88.00px;height:24.91px;"><span class="a" style="left:4.2px;top:5.55px;line-height:18.5px;">H</span></div>
<div class="cell" style="left:182.00px;top:709.68px;width:88.00px;height:24.91px;"><span class="a" style="left:4.2px;top:5.55px;line-height:18.5px;">6/28/2016</span></div>
<div class="cell" style="left:271.00px;top:709.68px;width:89.00px;height:24.91px;"><span class="a" style="left:4.2px;top:5.55px;line-height:18.5px;">750110709</span></div>
<div class="cell" style="left:361.00px;top:709.68px;width:88.00px;height:24.91px;"><span class="a" style="left:4.2px;top:5.55px;line-height:18.5px;">7/14/2016</span></div>
<div class="cell" style="left:450.00px;top:709.68px;width:104.00px;height:24.91px;"><span class="a" style="right:3.4px;top:5.55px;line-height:18.5px;">3283</span></div>
<div class="cell" style="left:555.00px;top:709.68px;width:108.00px;height:24.91px;"><span class="a" style="right:3.4px;top:5.55px;line-height:18.5px;">47.5</span></div>
<div class="cell" style="left:664.00px;top:709.68px;width:100.00px;height:24.91px;"><span class="a" style="right:3.4px;top:5.55px;line-height:18.5px;">31.8</span></div>
<div class="cell" style="left:765.00px;top:709.68px;width:156.00px;height:24.91px;"><span class="a" style="right:3.4px;top:5.55px;line-height:18.5px;">155778.4</span></div>
<div class="cell" style="left:922.00px;top:709.68px;width:119.00px;height:24.91px;"><span class="a" style="right:3.4px;top:5.55px;line-height:18.5px;">104366.6</span></div>
<div class="cell" style="left:1042.00px;top:709.68px;width:125.00px;height:24.91px;"><span class="a" style="right:3.4px;top:5.55px;line-height:18.5px;">51411.8</span></div>
<div class="cell" style="left:3.80px;top:734.60px;width:88.20px;height:16.40px;"><span class="a" style="left:4.2px;top:5.55px;line-height:18.5px;">Online</span></div>
<div class="cell" style="left:93.00px;top:734.60px;width:88.00px;height:16.40px;"><span class="a" style="left:4.2px;top:5.55px;line-height:18.5px;">M</span></div>
<div class="cell" style="left:182.00px;top:734.60px;width:88.00px;height:16.40px;"><span class="a" style="left:4.2px;top:5.55px;line-height:18.5px;">07/06/2017</span></div>
<div class="cell" style="left:271.00px;top:734.60px;width:89.00px;height:16.40px;"><span class="a" style="left:4.2px;top:5.55px;line-height:18.5px;">940607200</span></div>
<div class="cell" style="left:361.00px;top:734.60px;width:88.00px;height:16.40px;"><span class="a" style="left:4.2px;top:5.55px;line-height:18.5px;">08/12/2017</span></div>
<div class="cell" style="left:450.00px;top:734.60px;width:104.00px;height:16.40px;"><span class="a" style="right:3.4px;top:5.55px;line-height:18.5px;">5428</span></div>
<div class="cell" style="left:555.00px;top:734.60px;width:108.00px;height:16.40px;"><span class="a" style="right:3.4px;top:5.55px;line-height:18.5px;">9.3</span></div>
<div class="cell" style="left:664.00px;top:734.60px;width:100.00px;height:16.40px;"><span class="a" style="right:3.4px;top:5.55px;line-height:18.5px;">6.9</span></div>
<div class="cell" style="left:765.00px;top:734.60px;width:156.00px;height:16.40px;"><span class="a" style="right:3.4px;top:5.55px;line-height:18.5px;">50643.2</span></div>
<div class="cell" style="left:922.00px;top:734.60px;width:119.00px;height:16.40px;"><span class="a" style="right:3.4px;top:5.55px;line-height:18.5px;">37561.8</span></div>
<div class="cell" style="left:1042.00px;top:734.60px;width:125.00px;height:16.40px;"><span class="a" style="right:3.4px;top:5.55px;line-height:18.5px;">13081.5</span></div>
<div class="a" style="left:59px;top:236px;width:1108px;height:1px;background:#e1e1e1;"></div>
<div class="a" style="left:59px;top:261px;width:1108px;height:1px;background:#e1e1e1;"></div>
<div class="a" style="left:59px;top:286px;width:1108px;height:1px;background:#e1e1e1;"></div>
<div class="a" style="left:59px;top:311px;width:1108px;height:1px;background:#e1e1e1;"></div>
<div class="a" style="left:59px;top:335px;width:1108px;height:1px;background:#e1e1e1;"></div>
<div class="a" style="left:59px;top:360px;width:1108px;height:1px;background:#e1e1e1;"></div>
<div class="a" style="left:59px;top:385px;width:1108px;height:1px;background:#e1e1e1;"></div>
<div class="a" style="left:59px;top:410px;width:1108px;height:1px;background:#e1e1e1;"></div>
<div class="a" style="left:59px;top:435px;width:1108px;height:1px;background:#e1e1e1;"></div>
<div class="a" style="left:59px;top:460px;width:1108px;height:1px;background:#e1e1e1;"></div>
<div class="a" style="left:59px;top:485px;width:1108px;height:1px;background:#e1e1e1;"></div>
<div class="a" style="left:59px;top:510px;width:1108px;height:1px;background:#e1e1e1;"></div>
<div class="a" style="left:59px;top:535px;width:1108px;height:1px;background:#e1e1e1;"></div>
<div class="a" style="left:59px;top:560px;width:1108px;height:1px;background:#e1e1e1;"></div>
<div class="a" style="left:59px;top:585px;width:1108px;height:1px;background:#e1e1e1;"></div>
<div class="a" style="left:59px;top:610px;width:1108px;height:1px;background:#e1e1e1;"></div>
<div class="a" style="left:59px;top:634px;width:1108px;height:1px;background:#e1e1e1;"></div>
<div class="a" style="left:59px;top:659px;width:1108px;height:1px;background:#e1e1e1;"></div>
<div class="a" style="left:59px;top:684px;width:1108px;height:1px;background:#e1e1e1;"></div>
<div class="a" style="left:59px;top:709px;width:1108px;height:1px;background:#e1e1e1;"></div>
<div class="a" style="left:59px;top:734px;width:1108px;height:1px;background:#e1e1e1;"></div>
<div class="a" style="left:92px;top:211px;width:1px;height:540px;background:#e1e1e1;"></div>
<div class="a" style="left:181px;top:211px;width:1px;height:540px;background:#e1e1e1;"></div>
<div class="a" style="left:270px;top:211px;width:1px;height:540px;background:#e1e1e1;"></div>
<div class="a" style="left:360px;top:211px;width:1px;height:540px;background:#e1e1e1;"></div>
<div class="a" style="left:449px;top:211px;width:1px;height:540px;background:#e1e1e1;"></div>
<div class="a" style="left:554px;top:211px;width:1px;height:540px;background:#e1e1e1;"></div>
<div class="a" style="left:663px;top:211px;width:1px;height:540px;background:#e1e1e1;"></div>
<div class="a" style="left:764px;top:211px;width:1px;height:540px;background:#e1e1e1;"></div>
<div class="a" style="left:921px;top:211px;width:1px;height:540px;background:#e1e1e1;"></div>
<div class="a" style="left:1041px;top:211px;width:1px;height:540px;background:#e1e1e1;"></div>
<div class="a" style="left:1167px;top:181px;width:1px;height:586px;background:#e1e1e1;"></div>
<div class="a" style="left:663px;top:211px;width:1.3px;height:540px;background:#1a73e8;"></div>
<div class="a" style="left:764px;top:211px;width:1.3px;height:540px;background:#1a73e8;"></div>
<div class="a" style="left:663px;top:211.5px;width:102.3px;height:25.2px;background:transparent;border:2px solid #1a73e8;box-sizing:border-box;"></div>
<div class="a" style="left:0px;top:181px;width:1182px;height:1px;background:#c4c7c5;"></div>
<div class="a" style="left:0px;top:211px;width:1182px;height:1px;background:#c4c7c5;"></div>
<div class="t" style="left:107.5px;width:60px;text-align:center;top:189.45px;font-size:14px;line-height:14px;color:#444746;font-weight:normal;">E</div>
<div class="t" style="left:196.5px;width:60px;text-align:center;top:189.45px;font-size:14px;line-height:14px;color:#444746;font-weight:normal;">F</div>
<div class="t" style="left:286.0px;width:60px;text-align:center;top:189.45px;font-size:14px;line-height:14px;color:#444746;font-weight:normal;">G</div>
<div class="t" style="left:375.5px;width:60px;text-align:center;top:189.45px;font-size:14px;line-height:14px;color:#444746;font-weight:normal;">H</div>
<div class="t" style="left:472.5px;width:60px;text-align:center;top:189.45px;font-size:14px;line-height:14px;color:#444746;font-weight:normal;">I</div>
<div class="t" style="left:579.5px;width:60px;text-align:center;top:189.45px;font-size:14px;line-height:14px;color:#444746;font-weight:normal;">J</div>
<div class="a" style="left:663.5px;top:181.5px;width:101.5px;height:29.5px;background:#0b57d0;"></div>
<div class="t" style="left:684.5px;width:60px;text-align:center;top:189.45px;font-size:14px;line-height:14px;color:#fff;font-weight:bold;">K</div>
<div class="t" style="left:813.5px;width:60px;text-align:center;top:189.45px;font-size:14px;line-height:14px;color:#444746;font-weight:normal;">L</div>
<div class="t" style="left:952.0px;width:60px;text-align:center;top:189.45px;font-size:14px;line-height:14px;color:#444746;font-weight:normal;">M</div>
<div class="t" style="left:1075.0px;width:60px;text-align:center;top:189.45px;font-size:14px;line-height:14px;color:#444746;font-weight:normal;">N</div>
<div class="a" style="left:92px;top:181px;width:1px;height:30px;background:#c4c7c5;"></div>
<div class="a" style="left:181px;top:181px;width:1px;height:30px;background:#c4c7c5;"></div>
<div class="a" style="left:270px;top:181px;width:1px;height:30px;background:#c4c7c5;"></div>
<div class="a" style="left:360px;top:181px;width:1px;height:30px;background:#c4c7c5;"></div>
<div class="a" style="left:449px;top:181px;width:1px;height:30px;background:#c4c7c5;"></div>
<div class="a" style="left:554px;top:181px;width:1px;height:30px;background:#c4c7c5;"></div>
<div class="a" style="left:663px;top:181px;width:1px;height:30px;background:#c4c7c5;"></div>
<div class="a" style="left:764px;top:181px;width:1px;height:30px;background:#c4c7c5;"></div>
<div class="a" style="left:921px;top:181px;width:1px;height:30px;background:#c4c7c5;"></div>
<div class="a" style="left:1041px;top:181px;width:1px;height:30px;background:#c4c7c5;"></div>
<div class="a" style="left:1167px;top:181px;width:1px;height:30px;background:#c4c7c5;"></div>
<div class="a" style="left:0px;top:181px;width:53.5px;height:25.5px;background:#f8f9fa;"></div>
<div class="a" style="left:53.5px;top:181px;width:5px;height:30.5px;background:#c4c7c5;"></div>
<div class="a" style="left:0px;top:206.5px;width:58.5px;height:5px;background:#c4c7c5;"></div>
<div class="a" style="left:0px;top:211.5px;width:58.5px;height:539.5px;background:#d3e3fd;"></div>
<div class="a" style="left:0px;top:236px;width:58.5px;height:1px;background:#b7c3d9;"></div>
<div class="a" style="left:0;top:211.50px;width:58px;height:24.80px;overflow:hidden;"><div class="t" style="left:0;width:58px;text-align:center;top:6.35px;font-size:14px;line-height:14px;font-weight:bold;color:#041e49;">1</div></div>
<div class="a" style="left:0px;top:261px;width:58.5px;height:1px;background:#b7c3d9;"></div>
<div class="a" style="left:0;top:236.30px;width:58px;height:24.92px;overflow:hidden;"><div class="t" style="left:0;width:58px;text-align:center;top:6.41px;font-size:14px;line-height:14px;font-weight:bold;color:#041e49;">2</div></div>
<div class="a" style="left:0px;top:286px;width:58.5px;height:1px;background:#b7c3d9;"></div>
<div class="a" style="left:0;top:261.22px;width:58px;height:24.91px;overflow:hidden;"><div class="t" style="left:0;width:58px;text-align:center;top:6.41px;font-size:14px;line-height:14px;font-weight:bold;color:#041e49;">3</div></div>
<div class="a" style="left:0px;top:311px;width:58.5px;height:1px;background:#b7c3d9;"></div>
<div class="a" style="left:0;top:286.13px;width:58px;height:24.92px;overflow:hidden;"><div class="t" style="left:0;width:58px;text-align:center;top:6.41px;font-size:14px;line-height:14px;font-weight:bold;color:#041e49;">4</div></div>
<div class="a" style="left:0px;top:335px;width:58.5px;height:1px;background:#b7c3d9;"></div>
<div class="a" style="left:0;top:311.05px;width:58px;height:24.92px;overflow:hidden;"><div class="t" style="left:0;width:58px;text-align:center;top:6.41px;font-size:14px;line-height:14px;font-weight:bold;color:#041e49;">5</div></div>
<div class="a" style="left:0px;top:360px;width:58.5px;height:1px;background:#b7c3d9;"></div>
<div class="a" style="left:0;top:335.96px;width:58px;height:24.91px;overflow:hidden;"><div class="t" style="left:0;width:58px;text-align:center;top:6.41px;font-size:14px;line-height:14px;font-weight:bold;color:#041e49;">6</div></div>
<div class="a" style="left:0px;top:385px;width:58.5px;height:1px;background:#b7c3d9;"></div>
<div class="a" style="left:0;top:360.88px;width:58px;height:24.92px;overflow:hidden;"><div class="t" style="left:0;width:58px;text-align:center;top:6.41px;font-size:14px;line-height:14px;font-weight:bold;color:#041e49;">7</div></div>
<div class="a" style="left:0px;top:410px;width:58.5px;height:1px;background:#b7c3d9;"></div>
<div class="a" style="left:0;top:385.79px;width:58px;height:24.92px;overflow:hidden;"><div class="t" style="left:0;width:58px;text-align:center;top:6.41px;font-size:14px;line-height:14px;font-weight:bold;color:#041e49;">8</div></div>
<div class="a" style="left:0px;top:435px;width:58.5px;height:1px;background:#b7c3d9;"></div>
<div class="a" style="left:0;top:410.71px;width:58px;height:24.91px;overflow:hidden;"><div class="t" style="left:0;width:58px;text-align:center;top:6.41px;font-size:14px;line-height:14px;font-weight:bold;color:#041e49;">9</div></div>
<div class="a" style="left:0px;top:460px;width:58.5px;height:1px;background:#b7c3d9;"></div>
<div class="a" style="left:0;top:435.62px;width:58px;height:24.91px;overflow:hidden;"><div class="t" style="left:0;width:58px;text-align:center;top:6.41px;font-size:14px;line-height:14px;font-weight:bold;color:#041e49;">10</div></div>
<div class="a" style="left:0px;top:485px;width:58.5px;height:1px;background:#b7c3d9;"></div>
<div class="a" style="left:0;top:460.53px;width:58px;height:24.92px;overflow:hidden;"><div class="t" style="left:0;width:58px;text-align:center;top:6.41px;font-size:14px;line-height:14px;font-weight:bold;color:#041e49;">11</div></div>
<div class="a" style="left:0px;top:510px;width:58.5px;height:1px;background:#b7c3d9;"></div>
<div class="a" style="left:0;top:485.45px;width:58px;height:24.92px;overflow:hidden;"><div class="t" style="left:0;width:58px;text-align:center;top:6.41px;font-size:14px;line-height:14px;font-weight:bold;color:#041e49;">12</div></div>
<div class="a" style="left:0px;top:535px;width:58.5px;height:1px;background:#b7c3d9;"></div>
<div class="a" style="left:0;top:510.37px;width:58px;height:24.91px;overflow:hidden;"><div class="t" style="left:0;width:58px;text-align:center;top:6.41px;font-size:14px;line-height:14px;font-weight:bold;color:#041e49;">13</div></div>
<div class="a" style="left:0px;top:560px;width:58.5px;height:1px;background:#b7c3d9;"></div>
<div class="a" style="left:0;top:535.28px;width:58px;height:24.91px;overflow:hidden;"><div class="t" style="left:0;width:58px;text-align:center;top:6.41px;font-size:14px;line-height:14px;font-weight:bold;color:#041e49;">14</div></div>
<div class="a" style="left:0px;top:585px;width:58.5px;height:1px;background:#b7c3d9;"></div>
<div class="a" style="left:0;top:560.19px;width:58px;height:24.92px;overflow:hidden;"><div class="t" style="left:0;width:58px;text-align:center;top:6.41px;font-size:14px;line-height:14px;font-weight:bold;color:#041e49;">15</div></div>
<div class="a" style="left:0px;top:610px;width:58.5px;height:1px;background:#b7c3d9;"></div>
<div class="a" style="left:0;top:585.11px;width:58px;height:24.91px;overflow:hidden;"><div class="t" style="left:0;width:58px;text-align:center;top:6.41px;font-size:14px;line-height:14px;font-weight:bold;color:#041e49;">16</div></div>
<div class="a" style="left:0px;top:634px;width:58.5px;height:1px;background:#b7c3d9;"></div>
<div class="a" style="left:0;top:610.02px;width:58px;height:24.92px;overflow:hidden;"><div class="t" style="left:0;width:58px;text-align:center;top:6.41px;font-size:14px;line-height:14px;font-weight:bold;color:#041e49;">17</div></div>
<div class="a" style="left:0px;top:659px;width:58.5px;height:1px;background:#b7c3d9;"></div>
<div class="a" style="left:0;top:634.94px;width:58px;height:24.91px;overflow:hidden;"><div class="t" style="left:0;width:58px;text-align:center;top:6.41px;font-size:14px;line-height:14px;font-weight:bold;color:#041e49;">18</div></div>
<div class="a" style="left:0px;top:684px;width:58.5px;height:1px;background:#b7c3d9;"></div>
<div class="a" style="left:0;top:659.86px;width:58px;height:24.91px;overflow:hidden;"><div class="t" style="left:0;width:58px;text-align:center;top:6.41px;font-size:14px;line-height:14px;font-weight:bold;color:#041e49;">19</div></div>
<div class="a" style="left:0px;top:709px;width:58.5px;height:1px;background:#b7c3d9;"></div>
<div class="a" style="left:0;top:684.77px;width:58px;height:24.91px;overflow:hidden;"><div class="t" style="left:0;width:58px;text-align:center;top:6.41px;font-size:14px;line-height:14px;font-weight:bold;color:#041e49;">20</div></div>
<div class="a" style="left:0px;top:734px;width:58.5px;height:1px;background:#b7c3d9;"></div>
<div class="a" style="left:0;top:709.68px;width:58px;height:24.91px;overflow:hidden;"><div class="t" style="left:0;width:58px;text-align:center;top:6.41px;font-size:14px;line-height:14px;font-weight:bold;color:#041e49;">21</div></div>
<div class="a" style="left:0;top:734.60px;width:58px;height:16.40px;overflow:hidden;"><div class="t" style="left:0;width:58px;text-align:center;top:6.41px;font-size:14px;line-height:14px;font-weight:bold;color:#041e49;">22</div></div>
<div class="a" style="left:58px;top:211px;width:1px;height:540px;background:#c4c7c5;"></div>
<div class="a" style="left:1168px;top:212px;width:14px;height:539px;background:#fff;"></div>
<div class="a" style="left:1170px;top:214px;width:11.5px;height:33px;background:#dadce0;border-radius:6px;"></div>
<svg class="a" style="left:1169px;top:713px;" width="12" height="8" viewBox="0 0 12 8"><path d="M2 6.5L6 2.5l4 4z" fill="#9aa0a6"/></svg>
<div class="a" style="left:1168px;top:730px;width:14px;height:1px;background:#e1e1e1;"></div>
<svg class="a" style="left:1169px;top:736px;" width="12" height="8" viewBox="0 0 12 8"><path d="M2 1.5L6 5.5l4-4z" fill="#9aa0a6"/></svg>
<div class="a" style="left:0px;top:751px;width:1182px;height:16px;background:#fff;"></div>
<div class="a" style="left:0px;top:751px;width:59px;height:16px;background:#f8f9fa;"></div>
<div class="a" style="left:59px;top:751px;width:1px;height:16px;background:#e1e1e1;"></div>
<div class="a" style="left:196px;top:753.3px;width:459px;height:11px;background:#dadce0;border-radius:6px;"></div>
<svg class="a" style="left:1132px;top:753px;" width="10" height="12" viewBox="0 0 10 12"><path d="M7 2.5L3 6l4 3.5z" fill="#9aa0a6"/></svg>
<svg class="a" style="left:1153px;top:753px;" width="10" height="12" viewBox="0 0 10 12"><path d="M3 2.5L7 6l-4 3.5z" fill="#9aa0a6"/></svg>
<div class="a" style="left:1167px;top:751px;width:1px;height:16px;background:#e1e1e1;"></div>
<div class="a" style="left:1126px;top:751px;width:1px;height:16px;background:#eeeeee;"></div>
<div class="a" style="left:0px;top:767px;width:1650px;height:1px;background:#e3e6ea;"></div>
<div class="a" style="left:0px;top:812.7px;width:1650px;height:2.3px;background:#1f1f1f;"></div>
<div class="a" style="left:72.5px;top:789.8px;width:13px;height:2.4px;background:#444746;"></div>
<div class="a" style="left:77.8px;top:784.5px;width:2.4px;height:13px;background:#444746;"></div>
<div class="a" style="left:120px;top:784.5px;width:19px;height:2.3px;background:#444746;"></div>
<div class="a" style="left:120px;top:790px;width:19px;height:2.3px;background:#444746;"></div>
<div class="a" style="left:120px;top:795.5px;width:19px;height:2.3px;background:#444746;"></div>
<div class="a" style="left:171px;top:768px;width:115px;height:44px;background:#e1e9f7;"></div>
<div class="t" style="left:185px;top:781.84px;font-size:18.5px;line-height:18.5px;color:#0b57d0;font-weight:bold;">Sheet1</div>
<svg class="a" style="left:260px;top:787px;" width="13" height="8" viewBox="0 0 13 8"><path d="M1 1h11L6.5 7z" fill="#0b57d0"/></svg>
<div class="a" style="left:1403.5px;top:771.5px;width:160px;height:38px;background:#c4eed0;border-radius:9px;"></div>
<div class="t" style="left:1415.5px;top:781.89px;font-size:17.5px;line-height:17.5px;color:#072711;font-weight:normal;-webkit-text-stroke:0.25px #072711;">Sum: 21865.6</div>
<svg class="a" style="left:1536.5px;top:786.5px;" width="13" height="8" viewBox="0 0 13 8"><path d="M1 1h11L6.5 7z" fill="#072711"/></svg>
<svg class="a" style="left:1607px;top:785px;" width="14" height="16" viewBox="0 0 14 16"><path d="M10 2.5L4.5 8l5.5 5.5" fill="none" stroke="#444746" stroke-width="2.1"/></svg>
<div class="a" style="left:1217.5px;top:83px;width:411px;height:663px;background:#fff;border:1px solid #e3e3e3;border-radius:22px;box-sizing:border-box;"></div>
<svg class="a" style="left:1241.5px;top:104.5px;" width="21" height="21" viewBox="0 0 24 24"><path d="M12 0Q15.2 8.8 24 12 15.2 15.2 12 24 8.8 15.2 0 12 8.8 8.8 12 0z" fill="#1f1f1f"/></svg>
<div class="t" style="left:1276px;top:105.00px;font-size:21.5px;line-height:21.5px;color:#1f1f1f;font-weight:normal;">Gemini</div>
<div class="a" style="left:1512.8px;top:106.3px;width:4.4px;height:4.4px;background:#444746;border-radius:50%;"></div>
<div class="a" style="left:1512.8px;top:112.8px;width:4.4px;height:4.4px;background:#444746;border-radius:50%;"></div>
<div class="a" style="left:1512.8px;top:119.3px;width:4.4px;height:4.4px;background:#444746;border-radius:50%;"></div>
<svg class="a" style="left:1546px;top:105px;" width="20" height="20" viewBox="0 0 20 20"><path d="M12 3.5h4.5V8M8 16.5H3.5V12" fill="none" stroke="#444746" stroke-width="2.1"/></svg>
<svg class="a" style="left:1587px;top:105px;" width="20" height="20" viewBox="0 0 20 20"><path d="M3 3l14 14M17 3L3 17" stroke="#444746" stroke-width="2.2"/></svg>
<div class="a" style="left:1293.5px;top:156.5px;width:315px;height:123.5px;background:#e9eef6;border-radius:18px;"></div>
<div class="t" style="left:1309px;top:179.56px;font-size:17.3px;line-height:17.3px;color:#1f1f1f;font-weight:normal;letter-spacing:0.42px;">Can you keep the numbers to one</div>
<div class="t" style="left:1309px;top:210.16px;font-size:17.3px;line-height:17.3px;color:#1f1f1f;font-weight:normal;letter-spacing:0.42px;">decimal point in columns J to N</div>
<div class="t" style="left:1309px;top:240.96px;font-size:17.3px;line-height:17.3px;color:#1f1f1f;font-weight:normal;letter-spacing:0.42px;">of A1:A100</div>
<div class="a" style="left:1613.5px;top:152px;width:10px;height:112.5px;background:#dadce0;border-radius:5px;"></div>
<svg class="a" style="left:1241.5px;top:313.5px;" width="26" height="26" viewBox="0 0 24 24"><path d="M12 0Q15.2 8.8 24 12 15.2 15.2 12 24 8.8 15.2 0 12 8.8 8.8 12 0z" fill="#1f72ea"/></svg>
<div class="t" style="left:1240px;top:358.96px;font-size:18px;line-height:18px;color:#1f1f1f;font-weight:bold;">Referenced: A1:N100</div>
<div class="t" style="left:1240px;top:420.66px;font-size:18px;line-height:18px;color:#1f1f1f;font-weight:normal;letter-spacing:0.18px;">I've formatted columns J to N to display</div>
<div class="t" style="left:1240px;top:451.06px;font-size:18px;line-height:18px;color:#1f1f1f;font-weight:normal;letter-spacing:0.18px;">numbers with one decimal point.</div>
<svg class="a" style="left:1238px;top:501px;" width="15" height="12" viewBox="0 0 15 12"><path d="M2.5 3l5 5 5-5" fill="none" stroke="#1f5b8b" stroke-width="2"/></svg>
<div class="t" style="left:1268px;top:500.18px;font-size:15.5px;line-height:15.5px;color:#1f5b8b;font-weight:normal;">Sources (1)</div>
<div class="a" style="left:1218.5px;top:522.5px;width:410px;height:223px;background:#fff;border:1px solid #e3e3e3;border-radius:22px;box-sizing:border-box;"></div>
<div class="a" style="left:1239.5px;top:544px;width:369px;height:118.5px;background:#eef2f8;border-radius:22px;"></div>
<div class="t" style="left:1260px;top:564.55px;font-size:20.5px;line-height:20.5px;color:#5e5e5e;font-weight:normal;letter-spacing:0.25px;">Enter a prompt here</div>
<div class="a" style="left:1260px;top:606.5px;width:177.5px;height:40px;background:transparent;border:1px solid #c7c7c7;border-radius:10px;box-sizing:border-box;"></div>
<svg class="a" style="left:1274.8px;top:617.3px;" width="18.5" height="18" viewBox="0 0 18.5 18"><rect x="0" y="0" width="18.5" height="18" rx="2.8" fill="#22a047"/><path d="M0 7.6h18.5M7.1 0v18" stroke="#eef2f8" stroke-width="2"/></svg>
<div class="t" style="left:1307.5px;top:617.90px;font-size:17.6px;line-height:17.6px;color:#1f1f1f;font-weight:normal;">A1:N100 (K:K)</div>
<div class="a" style="left:1218.5px;top:668px;width:384.5px;height:77.5px;background:transparent;border-right:1px solid #e3e3e3;border-bottom:1px solid #e3e3e3;border-bottom-right-radius:20px;border-bottom-left-radius:22px;box-sizing:border-box;"></div>
<div class="t" style="left:1284.5px;top:685.73px;font-size:14.5px;line-height:14.5px;color:#6b6b6b;font-weight:normal;letter-spacing:0.2px;width:279px;overflow:hidden;">Gemini in Workspace emini in Workspace</div>
<div class="t" style="left:1287px;top:706.53px;font-size:14.5px;line-height:14.5px;color:#6b6b6b;font-weight:normal;letter-spacing:0.45px;width:273px;overflow:hidden;">so double-check resp double-check respo</div>
</body></html>
